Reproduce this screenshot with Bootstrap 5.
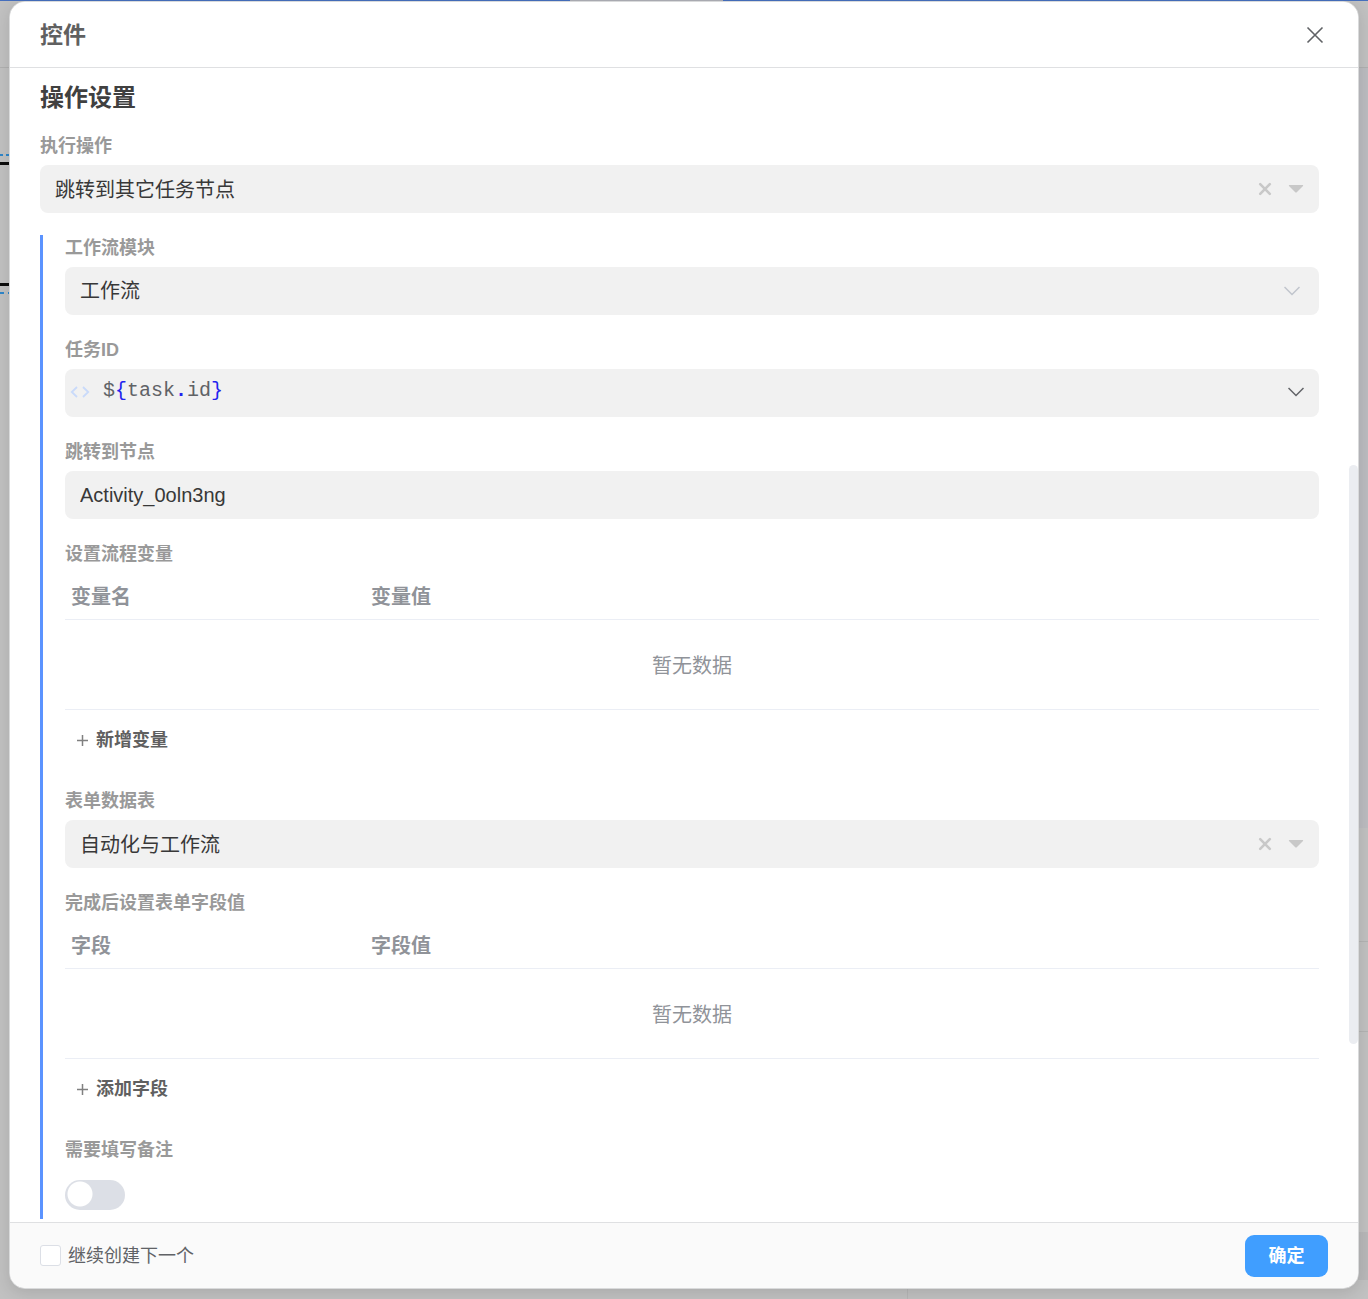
<!DOCTYPE html>
<html lang="zh-CN">
<head>
<meta charset="utf-8">
<meta name="viewport" content="width=device-width, initial-scale=1">
<title>控件</title>
<link href="https://cdn.jsdelivr.net/npm/bootstrap@5.3.0/dist/css/bootstrap.min.css" rel="stylesheet">
<style>
  body { font-family: "Liberation Sans", "Noto Sans CJK SC", sans-serif; color: #606266; background: #c1c1c1; }
  button, input, select { font-family: inherit; color: inherit; }

  /* dimmed page behind the dialog */
  .backdrop-page {
    padding: 1px 9px 10px;
    min-height: 100vh;
    background:
      linear-gradient(#aeafb6, #aeafb6) 570px 0 / 153px 1px no-repeat,
      linear-gradient(#466fbd, #466fbd) 0 0 / 100% 1px no-repeat,
      linear-gradient(#b0b0b0, #b0b0b0) 0 67px / 100% 1px no-repeat,
      repeating-linear-gradient(90deg, #2f86c9 0 3px, transparent 3px 6px) 0 154px / 10px 2px no-repeat,
      linear-gradient(#0d0d0d, #0d0d0d) 0 162px / 10px 3px no-repeat,
      linear-gradient(#0d0d0d, #0d0d0d) 0 283px / 10px 3px no-repeat,
      repeating-linear-gradient(90deg, #2f86c9 0 4px, transparent 4px 8px) 0 292px / 10px 2px no-repeat,
      linear-gradient(#bcbcc0, #bcbcc0) 100% 68px / 10px 760px no-repeat,
      linear-gradient(#b3b3b3, #b3b3b3) 100% 941px / 10px 1px no-repeat,
      linear-gradient(#b3b3b3, #b3b3b3) 100% 1031px / 10px 1px no-repeat,
      linear-gradient(#b8b8b9, #b8b8b9) 100% 1232px / 10px 48px no-repeat,
      linear-gradient(#b6b6b6, #b6b6b6) 907px 100% / 1px 10px no-repeat,
      #c1c1c1;
  }
  .dialog { border: 1px solid #d9dadb; border-radius: 16px; background-clip: padding-box; box-shadow: 0 4px 16px rgba(0, 0, 0, .12); overflow: hidden; }
  .dialog-head { height: 66px; padding: 0 30px; background: #fff; border-bottom: 1px solid #dfe0e2; }
  .dialog-title { font-size: 23px; font-weight: 700; line-height: 36px; color: #606060; }
  .dialog-body { padding: 11px 39px 3px 30px; }
  .dialog-foot { padding: 12px 30px 11px; background: #fafafa; border-top: 1px solid #dfe0e2; }
  .icon-btn { border: 0; padding: 0; background: none; display: flex; align-items: center; justify-content: center; }
  .close-btn { width: 26px; height: 26px; color: #606266; }

  .section-title { font-size: 24px; font-weight: 700; line-height: 38px; color: #404040; margin-bottom: 16px; }
  .field-group { margin-bottom: 22px; }
  .field-label { display: block; font-size: 18px; font-weight: 700; line-height: 26px; color: #999; margin-bottom: 6px; }
  .field-box { height: 48px; border-radius: 8px; background: #f1f1f1; padding: 0 15px; font-size: 20px; color: #383838; }
  .field-box select, .field-box input { appearance: none; border: 0; padding: 0; background: transparent; height: 48px; min-width: 0; outline: 0; color: #383838; opacity: 1; }
  .field-box .clearable { padding-top: 2px; }
  .nested { border-left: 3px solid #5b93ff; padding: 0 0 9px 22px; }

  .code-box { padding: 0 15px 3px 5px; }
  .code-text { font-family: "Liberation Mono", monospace; font-size: 20px; line-height: 24px; padding: 0 0 2px 13px; color: #606266; outline: 0; }
  .code-text span { color: #2222ee; }

  .data-table { font-size: 20px; color: #909399; margin: 0; width: 100%; table-layout: fixed; border-collapse: separate; border-spacing: 0; }
  .data-table th { height: 47px; padding: 2px 6px 0; font-weight: 700; line-height: 30px; vertical-align: middle; border-bottom: 1px solid #ebeef5; text-align: left; }
  .data-table td { height: 90px; padding: 2px 0 0; text-align: center; vertical-align: middle; border-bottom: 1px solid #ebeef5; }
  .name-col { width: 300px; }
  .add-btn { border: 0; background: none; height: 40px; margin: 10px 0 28px; padding: 0 11px; font-size: 18px; font-weight: 700; color: #606060; gap: 7px; }

  .toggle.form-check-input { display: block; width: 60px; height: 30px; margin: 17px 0 0; border: 0; border-radius: 15px; background-color: #dcdfe6;
    background-image: radial-gradient(circle at 15px 14px, #fff 12px, transparent 13px); background-size: 100% 100%; background-position: 0 0; }
  .toggle.form-check-input:checked { background-color: #409eff; background-image: radial-gradient(circle at 45px 14px, #fff 12px, transparent 13px); }
  .again-check.form-check-input { width: 21px; height: 21px; margin: 0 0 2px; border: 1px solid #dcdfe6; border-radius: 3px; }
  .again-label { font-size: 18px; line-height: 27px; color: #606266; margin-left: 7px; }
  .ok-btn { width: 83px; height: 42px; border-radius: 9px; padding: 0; font-size: 18px; font-weight: 700; color: #fff; background: #409eff; border: 0; }
  .scroll-thumb { position: absolute; right: 0; top: 36%; height: 45%; width: 9px; border-radius: 5px; background: #ebedf1; }
</style>
</head>
<body>
<div class="backdrop-page">
  <main class="dialog card" role="dialog" aria-labelledby="dlgTitle">
    <header class="dialog-head d-flex align-items-center justify-content-between">
      <h1 class="dialog-title mb-0" id="dlgTitle">控件</h1>
      <button type="button" class="icon-btn close-btn" aria-label="关闭">
        <svg width="18" height="18" viewBox="0 0 18 18" fill="none" stroke="currentColor" stroke-width="1.6"><path d="M1.5 1.5l15 15M16.5 1.5l-15 15"/></svg>
      </button>
    </header>

    <div class="dialog-body">
      <h2 class="section-title">操作设置</h2>
      <div class="field-group">
        <label class="field-label" for="action">执行操作</label>
        <div class="field-box d-flex align-items-center">
          <select id="action" class="clearable flex-grow-1"><option>跳转到其它任务节点</option></select>
          <button type="button" class="icon-btn me-3" aria-label="清除"><svg width="14" height="14" viewBox="0 0 14 14" fill="none" stroke="#c8c8c8" stroke-width="2.6" stroke-linecap="round"><path d="M2.2 2.2l9.6 9.6M11.8 2.2l-9.6 9.6"/></svg></button>
          <svg width="16" height="10" viewBox="0 0 16 10" fill="#c8c8c8"><path d="M1.3 1h13.4q.8.2.3.9L9 8Q8 9 7 8L1 1.9Q.5 1.200 1.300 1z"/></svg>
        </div>
      </div>

      <section class="nested">
        <div class="field-group">
          <label class="field-label" for="module">工作流模块</label>
          <div class="field-box d-flex align-items-center">
            <select id="module" class="flex-grow-1"><option>工作流</option></select>
            <svg class="me-1" width="16" height="10" viewBox="0 0 16 10" fill="none" stroke="#c0c4cc" stroke-width="1.5"><path d="M.5 1L8 8.500 15.500 1"/></svg>
          </div>
        </div>

        <div class="field-group">
          <span class="field-label" id="taskLabel">任务ID</span>
          <div class="field-box code-box d-flex align-items-center">
            <svg width="20" height="12" viewBox="0 0 20 12" fill="none" stroke="#c9dafa" stroke-width="1.8"><path d="M7 1L1.800 6 7 11M13 1l5.200 5L13 11"/></svg>
            <div class="code-text flex-grow-1" role="textbox" contenteditable="true" spellcheck="false" aria-labelledby="taskLabel">$<span>{</span>task<span class="fw-bold">.</span>id<span>}</span></div>
            <button type="button" class="icon-btn" aria-label="展开"><svg width="16" height="10" viewBox="0 0 16 10" fill="none" stroke="#606266" stroke-width="1.5"><path d="M.5 1L8 8.500 15.500 1"/></svg></button>
          </div>
        </div>

        <div class="field-group">
          <label class="field-label" for="target">跳转到节点</label>
          <div class="field-box d-flex align-items-center">
            <input id="target" type="text" class="flex-grow-1" value="Activity_0oln3ng" spellcheck="false">
          </div>
        </div>

        <div>
          <span class="field-label" id="varsLabel">设置流程变量</span>
          <table class="data-table" aria-labelledby="varsLabel">
            <thead><tr><th class="name-col" scope="col">变量名</th><th scope="col">变量值</th></tr></thead>
            <tbody><tr><td colspan="2">暂无数据</td></tr></tbody>
          </table>
          <button type="button" class="add-btn d-flex align-items-center">
            <svg width="13" height="13" viewBox="0 0 13 13" fill="none" stroke="#808080" stroke-width="1.5"><path d="M1 6.500h11M6.500 1v11"/></svg>新增变量
          </button>
        </div>

        <div class="field-group">
          <label class="field-label" for="formTable">表单数据表</label>
          <div class="field-box d-flex align-items-center">
            <select id="formTable" class="clearable flex-grow-1"><option>自动化与工作流</option></select>
            <button type="button" class="icon-btn me-3" aria-label="清除"><svg width="14" height="14" viewBox="0 0 14 14" fill="none" stroke="#c8c8c8" stroke-width="2.6" stroke-linecap="round"><path d="M2.2 2.2l9.6 9.6M11.8 2.2l-9.6 9.6"/></svg></button>
            <svg width="16" height="10" viewBox="0 0 16 10" fill="#c8c8c8"><path d="M1.3 1h13.4q.8.2.3.9L9 8Q8 9 7 8L1 1.9Q.5 1.200 1.300 1z"/></svg>
          </div>
        </div>

        <div>
          <span class="field-label" id="fieldsLabel">完成后设置表单字段值</span>
          <table class="data-table" aria-labelledby="fieldsLabel">
            <thead><tr><th class="name-col" scope="col">字段</th><th scope="col">字段值</th></tr></thead>
            <tbody><tr><td colspan="2">暂无数据</td></tr></tbody>
          </table>
          <button type="button" class="add-btn d-flex align-items-center">
            <svg width="13" height="13" viewBox="0 0 13 13" fill="none" stroke="#808080" stroke-width="1.5"><path d="M1 6.500h11M6.500 1v11"/></svg>添加字段
          </button>
        </div>

        <div>
          <label class="field-label" for="remark">需要填写备注</label>
          <input id="remark" type="checkbox" role="switch" class="toggle form-check-input">
        </div>
      </section>
    </div>

    <footer class="dialog-foot d-flex align-items-center justify-content-between">
      <div class="d-flex align-items-center">
        <input id="again" type="checkbox" class="again-check form-check-input">
        <label class="again-label" for="again">继续创建下一个</label>
      </div>
      <button type="button" class="btn ok-btn">确定</button>
    </footer>
    <div class="scroll-thumb" aria-hidden="true"></div>
  </main>
</div>
<script src="https://cdn.jsdelivr.net/npm/bootstrap@5.3.0/dist/js/bootstrap.bundle.min.js"></script>
</body>
</html>
